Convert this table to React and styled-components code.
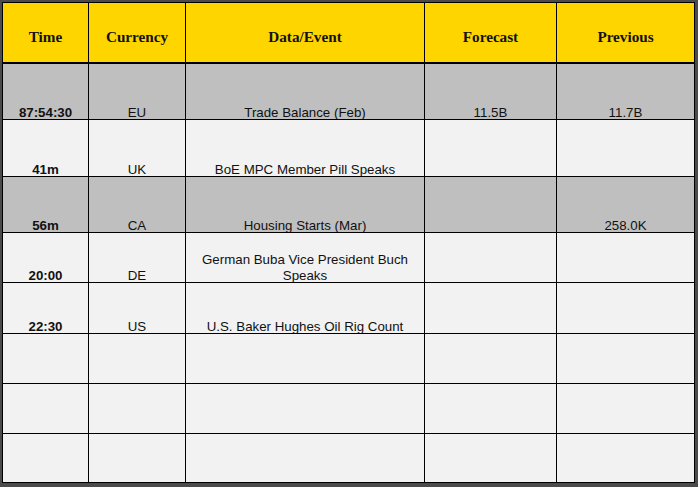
import React from "react";
import styled, { createGlobalStyle } from "styled-components";

const GlobalStyle = createGlobalStyle`
  html, body {
    margin: 0;
    padding: 0;
    background: #4b4b4b;
  }
`;

const columns = ["Time", "Currency", "Data/Event", "Forecast", "Previous"];

const rows = [
  { time: "87:54:30", cur: "EU", event: "Trade Balance (Feb)", forecast: "11.5B", previous: "11.7B", shaded: true, h: 55 },
  { time: "41m", cur: "UK", event: "BoE MPC Member Pill Speaks", forecast: "", previous: "", h: 56 },
  { time: "56m", cur: "CA", event: "Housing Starts (Mar)", forecast: "", previous: "258.0K", shaded: true, h: 55 },
  { time: "20:00", cur: "DE", event: "German Buba Vice President Buch Speaks", forecast: "", previous: "", h: 49 },
  { time: "22:30", cur: "US", event: "U.S. Baker Hughes Oil Rig Count", forecast: "", previous: "", h: 50 },
  { time: "", cur: "", event: "", forecast: "", previous: "", h: 49 },
  { time: "", cur: "", event: "", forecast: "", previous: "", h: 49 },
  { time: "", cur: "", event: "", forecast: "", previous: "", h: 48 },
];

export default function App() {
  return (
    <>
      <GlobalStyle />
      <Frame>
        <Sheet>
          {columns.map((c) => (
            <HeadCell key={c}>{c}</HeadCell>
          ))}
          {rows.map((r, i) => (
            <React.Fragment key={i}>
              <Cell $shaded={r.shaded} $h={r.h} $bold><Text>{r.time}</Text></Cell>
              <Cell $shaded={r.shaded} $h={r.h}><Text>{r.cur}</Text></Cell>
              <Cell $shaded={r.shaded} $h={r.h} $wrap><Text>{r.event}</Text></Cell>
              <Cell $shaded={r.shaded} $h={r.h}><Text>{r.forecast}</Text></Cell>
              <Cell $shaded={r.shaded} $h={r.h}><Text>{r.previous}</Text></Cell>
            </React.Fragment>
          ))}
        </Sheet>
      </Frame>
    </>
  );
}

const Frame = styled.div`
  width: 698px;
  height: 487px;
  box-sizing: border-box;
  padding: 2px 3px 4px 2px;
  background: #4b4b4b;
`;

const Sheet = styled.div`
  display: grid;
  grid-template-columns: 85px 96px 238px 131px 137px;
  gap: 1px;
  background: #000;
  border: 1px solid #000;
  width: max-content;
`;

const HeadCell = styled.div`
  height: 60px;
  box-sizing: border-box;
  border-bottom: 1px solid #000;
  background: #ffd500;
  display: flex;
  align-items: center;
  justify-content: center;
  padding-top: 9px;
  font-family: "Liberation Serif", serif;
  font-weight: bold;
  font-size: 15.2px;
  color: #111;
`;

const Cell = styled.div`
  height: ${(p) => p.$h}px;
  box-sizing: border-box;
  overflow: hidden;
  background: ${(p) => (p.$shaded ? "#bfbfbf" : "#f2f2f2")};
  display: flex;
  align-items: flex-end;
  justify-content: center;
  text-align: center;
  padding: 0 ${(p) => (p.$wrap ? "12px" : "2px")};
  font-family: "Liberation Sans", Arial, sans-serif;
  font-size: 13.3px;
  line-height: 16px;
  font-weight: ${(p) => (p.$bold ? "bold" : "normal")};
  color: #111;
`;

const Text = styled.span`
  margin-bottom: -2px;
`;
